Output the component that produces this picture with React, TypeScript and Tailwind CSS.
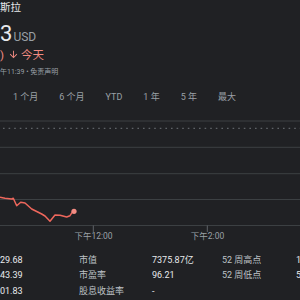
import { useState } from "react"

const FONT = "font-['Roboto','Noto_Sans_CJK_SC',sans-serif]"

const ranges = ["1 个月", "6 个月", "YTD", "1 年", "5 年", "最大"]

const stats = [
  ["29.68", "市值", "7375.87亿", "52 周高点", "1"],
  ["43.39", "市盈率", "96.21", "52 周低点", "5"],
  ["01.83", "股息收益率", "-", "", ""],
]

// price line, chart-local coordinates
const points: [number, number][] = [
  [0, 94.3], [5, 95.3], [11.7, 96], [13.3, 95.3], [16.7, 102.7], [20.7, 99.3],
  [25, 100], [31.7, 106], [41.7, 111], [45, 113], [50, 118.3], [55, 112],
  [60, 112.3], [66.7, 114], [70, 112.7], [72.7, 108.7], [74, 108.3],
]

function ArrowDown() {
  return (
    <svg viewBox="0 0 24 24" className="w-[11px] h-[11px] fill-[#f28b82]">
      <path d="M20 12l-1.41-1.41L13 16.17V4h-2v12.17l-5.58-5.59L4 12l8 8 8-8z" />
    </svg>
  )
}

function Chart() {
  const grid = [18, 44.3, 70.7, 96.5, 122.5]
  return (
    <svg width={300} height={141} className="block">
      {grid.map((y) => (
        <line key={y} x1={0} x2={300} y1={y} y2={y} stroke="#3c4043" strokeWidth={1} />
      ))}
      <line x1={3} x2={300} y1={25.3} y2={25.3} stroke="#5f6368" strokeWidth={1.2} strokeDasharray="1.6 4" />
      <line x1={93.3} x2={93.3} y1={122.5} y2={129} stroke="#5f6368" />
      <line x1={207.3} x2={207.3} y1={122.5} y2={129} stroke="#5f6368" />
      <polyline
        points={points.map((p) => p.join(",")).join(" ")}
        fill="none"
        stroke="#ee675c"
        strokeWidth={1.5}
        strokeLinejoin="round"
      />
      <circle cx={74} cy={108.3} r={2.6} fill="#f28b82" />
      <text x={93.5} y={135.5} textAnchor="middle" fontSize={8.5} fill="#9aa0a6" fontFamily="Roboto, 'Noto Sans CJK SC', sans-serif">
        下午12:00
      </text>
      <text x={207.5} y={135.5} textAnchor="middle" fontSize={8.5} fill="#9aa0a6" fontFamily="Roboto, 'Noto Sans CJK SC', sans-serif">
        下午2:00
      </text>
    </svg>
  )
}

export default function App() {
  const [range] = useState("")

  return (
    <div className={`w-[300px] h-[300px] bg-[#202124] overflow-hidden ${FONT}`}>
      <div className="mt-[2px] h-[12px] leading-[12px] text-[10.5px] text-[#e8eaed]">斯拉</div>

      <div className="mt-[8.5px] flex items-baseline h-[22px] leading-[22px]">
        <span className="text-[22px] text-[#e8eaed]">3</span>
        <span className="ml-[1px] text-[12px] text-[#9aa0a6]">USD</span>
      </div>

      <div className="mt-[3px] flex items-center h-[14px] leading-[14px] text-[11.5px] text-[#f28b82]">
        <span>)</span>
        <span className="ml-[4px] mr-[2px] flex items-center">
          <ArrowDown />
        </span>
        <span>今天</span>
      </div>

      <div className="mt-[5px] h-[10px] leading-[10px] text-[7px] text-[#9aa0a6] whitespace-nowrap">
        午11:39 • 免责声明
      </div>

      <div className="mt-[14.5px] h-[12px] leading-[12px] flex gap-[21px] pl-[13px] text-[9px] text-[#9aa0a6] whitespace-nowrap">
        {ranges.map((r) => (
          <span key={r} className={r === range ? "text-[#8ab4f8]" : ""}>
            {r}
          </span>
        ))}
      </div>

      <Chart />

      <div className="mt-[8.75px] grid grid-cols-[79px_73px_70px_74px_1fr] text-[9px] leading-[15.5px] whitespace-nowrap">
        {stats.map((row, i) => (
          <div key={i} className="contents">
            <span className="text-[#e8eaed]">{row[0]}</span>
            <span className="text-[#bdc1c6]">{row[1]}</span>
            <span className="text-[#e8eaed]">{row[2]}</span>
            <span className="text-[#bdc1c6]">{row[3]}</span>
            <span className="text-[#e8eaed]">{row[4]}</span>
          </div>
        ))}
      </div>
    </div>
  )
}
